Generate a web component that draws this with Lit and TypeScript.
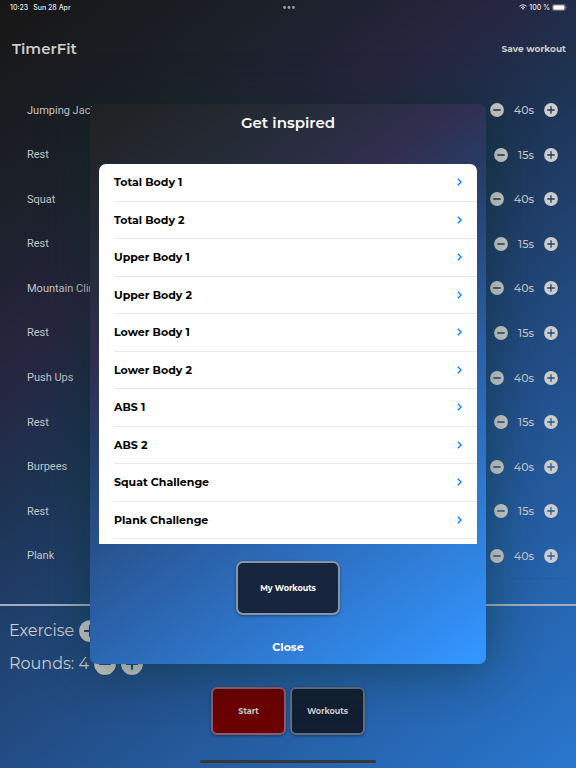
import { LitElement, html, css, svg } from "lit";
import { customElement, property } from "lit/decorators.js";

interface Interval {
  name: string;
  seconds: number;
}

const REST: Interval = { name: "Rest", seconds: 15 };
const INTERVALS: Interval[] = [
  { name: "Jumping Jacks", seconds: 40 },
  REST,
  { name: "Squat", seconds: 40 },
  REST,
  { name: "Mountain Climb", seconds: 40 },
  REST,
  { name: "Push Ups", seconds: 40 },
  REST,
  { name: "Burpees", seconds: 40 },
  REST,
  { name: "Plank", seconds: 40 },
];

const PRESETS = [
  "Total Body 1",
  "Total Body 2",
  "Upper Body 1",
  "Upper Body 2",
  "Lower Body 1",
  "Lower Body 2",
  "ABS 1",
  "ABS 2",
  "Squat Challenge",
  "Plank Challenge",
];

@customElement("step-button")
class StepButton extends LitElement {
  @property() kind: "plus" | "minus" = "plus";
  @property() label = "";

  static styles = css`
    :host {
      display: block;
      width: 14px;
      height: 14px;
    }
    :host([large]) {
      width: 22px;
      height: 22px;
    }
    .step {
      display: block;
      width: 100%;
      height: 100%;
      padding: 0;
      border: 0;
      background: none;
    }
    .glyph {
      display: block;
      width: 100%;
      height: 100%;
    }
  `;

  render() {
    return html`<button class="step" aria-label=${this.label}>
      <svg class="glyph" viewBox="0 0 28 28">
        <mask id="cut">
          <rect width="28" height="28" fill="#fff" />
          <path d="M7.5 14h13" stroke="#000" stroke-width="2.6" stroke-linecap="round" />
          ${this.kind === "plus"
            ? svg`<path d="M14 7.5v13" stroke="#000" stroke-width="2.6" stroke-linecap="round" />`
            : null}
        </mask>
        <circle cx="14" cy="14" r="13.8" fill="#cccccb" mask="url(#cut)" />
      </svg>
    </button>`;
  }
}

@customElement("interval-row")
class IntervalRow extends LitElement {
  @property() name = "";
  @property({ type: Number }) seconds = 0;

  static styles = css`
    :host {
      display: flex;
      align-items: center;
      gap: 10px;
      padding: 0 18px 0 27px;
      color: #c4c6c9;
    }
    .name {
      flex: 1;
      font-family: Roboto, Inter, sans-serif;
      font-size: 11px;
    }
    .time {
      font-size: 11px;
      font-weight: 500;
    }
  `;

  render() {
    return html`
      <span class="name">${this.name}</span>
      <step-button kind="minus" label="Shorten ${this.name}"></step-button>
      <span class="time">${this.seconds}s</span>
      <step-button kind="plus" label="Extend ${this.name}"></step-button>
    `;
  }
}

@customElement("inspire-dialog")
class InspireDialog extends LitElement {
  static styles = css`
    :host {
      position: absolute;
      inset: 0;
      display: grid;
      place-items: center;
    }
    .dialog {
      box-sizing: border-box;
      width: 68.75%;
      padding: 9px 9px 8px;
      border-radius: 7px;
      display: flex;
      flex-direction: column;
      align-items: center;
      color: #fff;
      background: linear-gradient(
        145deg,
        #202020 0%,
        #252c38 18%,
        #312e4f 31%,
        #263f6b 42%,
        #2a5ea3 61%,
        #3395ff 98%
      );
      box-shadow: 0 4px 48px 4px rgba(0, 40, 24, 0.4);
    }
    .title {
      margin: 0 0 31px;
      font-size: 15px;
      line-height: 20px;
      font-weight: 600;
    }
    .presets {
      box-sizing: border-box;
      width: 100%;
      height: 380px;
      margin: 0;
      padding: 0 0 5px;
      list-style: none;
      display: grid;
      grid-auto-rows: 1fr;
      background: #fff;
      border-radius: 7px 7px 0 0;
    }
    .item {
      display: flex;
      margin-left: 15px;
      border-bottom: 1px solid #e9e9ea;
    }
    .preset {
      flex: 1;
      display: flex;
      align-items: center;
      justify-content: space-between;
      padding: 0 15px 0 0;
      border: 0;
      background: none;
      color: #000;
      font: inherit;
      font-size: 11px;
      font-weight: 700;
      text-align: left;
    }
    .chevron {
      width: 5px;
      height: 8px;
    }
    .mine {
      width: 104px;
      height: 54px;
      margin-top: 17px;
      border: 2px solid #8795ab;
      border-radius: 7px;
      background: #18253e;
      color: #fff;
      font: inherit;
      font-size: 8px;
      font-weight: 700;
      box-shadow: 0 1px 3px rgba(0, 0, 0, 0.4);
    }
    .close {
      margin-top: 23px;
      padding: 0 8px;
      border: 0;
      background: none;
      color: #fff;
      font: inherit;
      font-size: 11px;
      line-height: 18px;
      font-weight: 700;
    }
  `;

  render() {
    return html`<section class="dialog" role="dialog" aria-label="Get inspired">
      <h2 class="title">Get inspired</h2>
      <ul class="presets">
        ${PRESETS.map(
          (name) => html`<li class="item">
            <button class="preset">
              ${name}
              <svg class="chevron" viewBox="0 0 5 8" fill="none">
                <path d="M.8.8 4.1 4 .8 7.2" stroke="#0a7cff" stroke-width="1.3" />
              </svg>
            </button>
          </li>`
        )}
      </ul>
      <button class="mine">My Workouts</button>
      <button class="close">Close</button>
    </section>`;
  }
}

@customElement("app-root")
class AppRoot extends LitElement {
  static styles = css`
    :host {
      position: relative;
      display: flex;
      flex-direction: column;
      min-height: 100vh;
      overflow: hidden;
      font-family: Montserrat, Inter, "Open Sans", sans-serif;
      color: #ccc;
      background: linear-gradient(
        143deg,
        #171615 0%,
        #1c212b 19%,
        #27253f 31%,
        #1d3352 42%,
        #224b82 62%,
        #2977cf 100%
      );
    }
    .status {
      display: grid;
      grid-template-columns: 1fr auto 1fr;
      align-items: center;
      height: 14px;
      padding: 0 9px 0 10px;
      font-family: Inter, sans-serif;
      font-size: 7px;
      font-weight: 500;
      color: #e4e4e4;
    }
    .clock {
      display: flex;
      gap: 5px;
    }
    .dots {
      width: 12px;
      height: 3px;
    }
    .power {
      display: flex;
      align-items: center;
      justify-content: flex-end;
      gap: 2px;
    }
    .wifi {
      width: 8px;
      height: 6px;
    }
    .battery {
      width: 15px;
      height: 7px;
    }
    .bar {
      display: flex;
      align-items: center;
      justify-content: space-between;
      height: 69px;
      padding: 0 10px 0 12px;
    }
    .brand {
      margin: 0;
      font-size: 15px;
      font-weight: 600;
    }
    .save {
      padding: 0;
      border: 0;
      background: none;
      color: inherit;
      font: inherit;
      font-size: 9px;
      font-weight: 700;
    }
    .intervals {
      display: grid;
      grid-auto-rows: 1fr;
      height: 490px;
      margin-top: 5px;
    }
    .rule {
      align-self: flex-end;
      width: 54px;
      margin: 0 10px 0 0;
      border: 0;
      border-top: 1px solid rgba(0, 0, 0, 0.08);
    }
    .setup {
      flex: 1;
      display: flex;
      flex-direction: column;
      margin-top: 25px;
      border-top: 2px solid #a3aebd;
      font-size: 16px;
      line-height: 22px;
    }
    .lines {
      display: grid;
      gap: 11px;
      padding: 14px 0 0 9px;
    }
    .line {
      display: flex;
      align-items: center;
      gap: 5px;
    }
    .actions {
      display: flex;
      justify-content: center;
      gap: 4px;
      margin-top: 12px;
    }
    .action {
      width: 75px;
      height: 48px;
      padding: 0;
      border: 2px solid #5f6e83;
      border-radius: 6px;
      background: #121f33;
      color: #ccc;
      font: inherit;
      font-size: 8px;
      font-weight: 700;
      box-shadow: 0 1px 3px rgba(0, 0, 0, 0.4);
    }
    .start {
      border-color: #8d5c6e;
      background: #6b0000;
    }
    .home {
      align-self: center;
      width: 176px;
      height: 3px;
      margin: auto 0 5px;
      border-radius: 2px;
      background: #373737;
    }
  `;

  render() {
    return html`
      <div class="status">
        <span class="clock"><span>10:23</span><span>Sun 28 Apr</span></span>
        <svg class="dots" viewBox="0 0 12 3" fill="#a0a0a4">
          <circle cx="1.6" cy="1.5" r="1.4" />
          <circle cx="6" cy="1.5" r="1.4" />
          <circle cx="10.4" cy="1.5" r="1.4" />
        </svg>
        <span class="power">
          <svg class="wifi" viewBox="0 0 16 12" fill="none" stroke="#e4e4e4" stroke-width="2">
            <path d="M1 4.6a10 10 0 0 1 14 0M3.7 7.5a6 6 0 0 1 8.6 0" />
            <path d="M8 11.6 5.5 9.2a3.5 3.5 0 0 1 5 0z" fill="#e4e4e4" stroke="none" />
          </svg>
          <span>100 %</span>
          <svg class="battery" viewBox="0 0 30 14">
            <rect x=".7" y=".7" width="26" height="12.6" rx="4" fill="none" stroke="#8a8c98" stroke-width="1.3" />
            <rect x="2.4" y="2.4" width="22.6" height="9.2" rx="2.4" fill="#fff" />
            <path d="M28.2 5v4q1.4-.6 1.4-2t-1.4-2z" fill="#8a8c98" />
          </svg>
        </span>
      </div>
      <header class="bar">
        <h1 class="brand">TimerFit</h1>
        <button class="save">Save workout</button>
      </header>
      <main class="intervals">
        ${INTERVALS.map(
          (i) => html`<interval-row .name=${i.name} .seconds=${i.seconds}></interval-row>`
        )}
      </main>
      <hr class="rule" />
      <footer class="setup">
        <div class="lines">
          <div class="line">
            <span>Exercise</span>
            <step-button large kind="plus" label="Add exercise"></step-button>
          </div>
          <div class="line">
            <span>Rounds: 4</span>
            <step-button large kind="minus" label="Fewer rounds"></step-button>
            <step-button large kind="plus" label="More rounds"></step-button>
          </div>
        </div>
        <div class="actions">
          <button class="action start">Start</button>
          <button class="action">Workouts</button>
        </div>
        <div class="home"></div>
      </footer>
      <inspire-dialog></inspire-dialog>
    `;
  }
}
